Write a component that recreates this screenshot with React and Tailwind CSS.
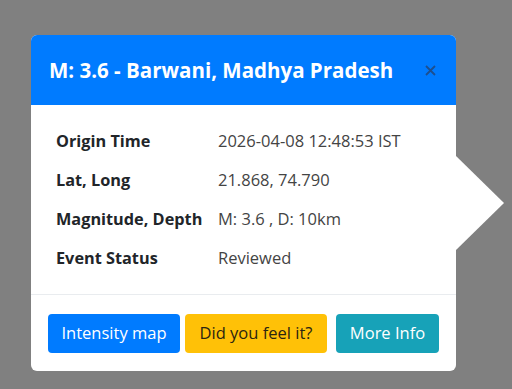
import React from "react";

const rows = [
  ["Origin Time", "2026-04-08 12:48:53 IST"],
  ["Lat, Long", "21.868, 74.790"],
  ["Magnitude, Depth", "M: 3.6 , D: 10km"],
  ["Event Status", "Reviewed"],
];

export default function App() {
  return (
    <div
      className="min-h-[389px] w-[512px] bg-[#808080] pt-[35px] pl-[31px]"
      style={{ fontFamily: '"Open Sans", "Noto Sans", sans-serif' }}
    >
      <div className="relative w-[425px] rounded-[6px] bg-white">
        {/* popover arrow */}
        <div className="absolute left-[424px] top-[120px] h-0 w-0 border-y-[48px] border-l-[49px] border-y-transparent border-l-white" />

        <div className="flex h-[70px] items-center justify-between rounded-t-[6px] bg-[#007bff] pl-[18px] pr-[20px]">
          <h3 className="text-[20.5px] font-bold text-white">M: 3.6 - Barwani, Madhya Pradesh</h3>
          <button className="text-[#1d4f8f]" aria-label="Close">
            <svg width="11" height="11" viewBox="0 0 11 11" stroke="currentColor" strokeWidth="1.8">
              <path d="M1 1l9 9M10 1L1 10" />
            </svg>
          </button>
        </div>

        <div className="grid grid-cols-[162px_1fr] pl-[25px] pt-[17px] pb-[16px] text-[16.5px]">
          {rows.map(([k, v]) => (
            <React.Fragment key={k}>
              <div className="flex h-[39px] items-center text-[16.3px] font-bold text-[#212529]">{k}</div>
              <div className="flex h-[39px] items-center text-[#444]">{v}</div>
            </React.Fragment>
          ))}
        </div>

        <div className="flex border-t border-[#e9ecef] pt-[19px] pb-[18px] pl-[17px] text-[16.5px]">
          <button className="h-[39px] w-[132px] rounded-[4px] bg-[#007bff] text-white">Intensity map</button>
          <button className="ml-[5px] h-[39px] w-[142px] rounded-[4px] bg-[#ffc107] text-[#2b2511]">Did you feel it?</button>
          <button className="ml-[9px] h-[39px] w-[103px] rounded-[4px] bg-[#17a2b8] text-white">More Info</button>
        </div>
      </div>
    </div>
  );
}
